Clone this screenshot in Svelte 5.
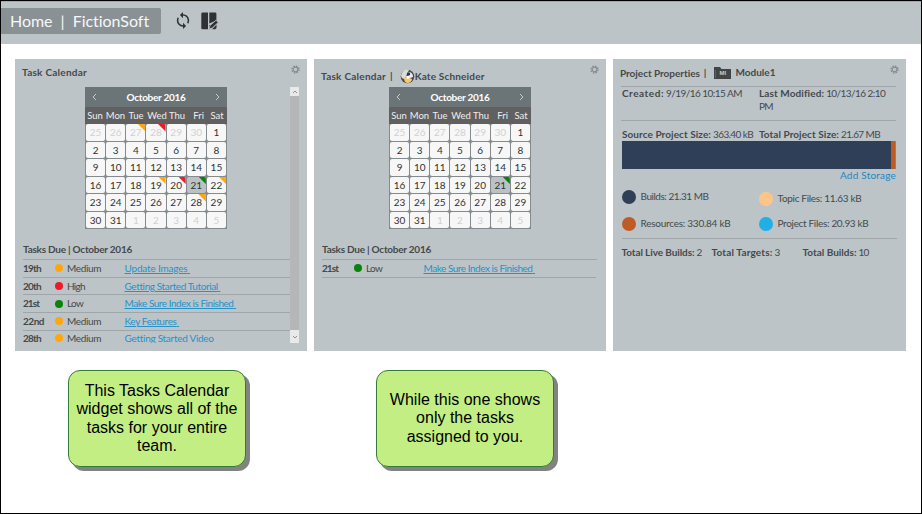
<script>
  const weekdays = ['Sun', 'Mon', 'Tue', 'Wed', 'Thu', 'Fri', 'Sat'];
  const days = [
    ...[25, 26, 27, 28, 29, 30].map((n) => ({ n, out: true })),
    ...Array.from({ length: 31 }, (_, i) => ({ n: i + 1, out: false })),
    ...[1, 2, 3, 4, 5].map((n) => ({ n, out: true }))
  ];
  const teamFlags = { 2: 'orange', 3: 'red', 24: 'orange', 25: 'red', 26: 'green', 27: 'orange', 33: 'orange' };
  const myFlags = { 26: 'green' };

  const teamTasks = [
    { day: '19th', dw: 18, color: 'orange', level: 'Medium', lw: 34, name: 'Update Images', w: 63 },
    { day: '20th', dw: 18, color: 'red', level: 'High', lw: 18, name: 'Getting Started Tutorial', w: 93 },
    { day: '21st', dw: 16, color: 'green', level: 'Low', lw: 16, name: 'Make Sure Index is Finished', w: 109 },
    { day: '22nd', dw: 21, color: 'orange', level: 'Medium', lw: 34, name: 'Key Features', w: 52 },
    { day: '28th', dw: 18, color: 'orange', level: 'Medium', lw: 34, name: 'Getting Started Video', w: 89, plain: true }
  ];
  const myTasks = [teamTasks[2]];

  // Tracks the text so that the label fills the given width.
  function fit(node, width) {
    const natural = node.getBoundingClientRect().width;
    node.style.letterSpacing = (width - natural) / node.textContent.length + 'px';
  }
</script>

{#snippet label(text, width, cls = '')}
  <span class="label {cls}" use:fit={width}>{text}</span>
{/snippet}

{#snippet gear()}
  <svg class="gear" viewBox="0 0 10 10" width="9" height="9">
    <circle cx="5" cy="5" r="3.9" fill="none" stroke="#858b8e" stroke-width="1.4" stroke-dasharray="1.75 1.313" />
    <circle cx="5" cy="5" r="2.6" fill="none" stroke="#858b8e" stroke-width="1.2" />
  </svg>
{/snippet}

{#snippet calendar(flags)}
  <div class="calendar">
    <div class="month">
      <svg width="5" height="8" viewBox="0 0 5 8"><path d="M4 1 1 4l3 3" /></svg>
      {@render label('October 2016', 59, 'bold')}
      <svg width="5" height="8" viewBox="0 0 5 8"><path d="M1 1l3 3-3 3" /></svg>
    </div>
    <div class="weekdays">
      {#each weekdays as d}<span class={d}>{d}</span>{/each}
    </div>
    <div class="days">
      {#each days as d, i}
        <div class="cell" class:out={d.out} class:today={i === 26}>
          {d.n}
          {#if flags[i]}<i class="flag {flags[i]}"></i>{/if}
        </div>
      {/each}
    </div>
  </div>
{/snippet}

{#snippet taskList(tasks)}
  <div class="due">{@render label('Tasks Due | October 2016', 109, 'semi')}</div>
  <div class="tasks">
    {#each tasks as t}
      <div class="task">
        {@render label(t.day, t.dw, 'semi')}
        <i class="dot {t.color}"></i>
        {@render label(t.level, t.lw)}
        <a class:plain={t.plain}>{@render label(t.name, t.w)}{#if !t.plain}&nbsp;{/if}</a>
      </div>
    {/each}
  </div>
{/snippet}

<div class="page">
  <header>
    <div class="crumb">{@render label('Home | FictionSoft', 139)}</div>
    <svg class="sync" width="14" height="17" viewBox="3.500 1 17 22">
      <path fill="#2f3234" d="M12 4V1L8 5l4 4V6c3.310 0 6 2.690 6 6 0 1.010-.25 1.970-.7 2.800l1.460 1.460C19.540 15.030 20 13.570 20 12c0-4.420-3.580-8-8-8zm0 14c-3.310 0-6-2.690-6-6 0-1.010.25-1.970.7-2.800L5.240 7.740C4.460 8.970 4 10.430 4 12c0 4.420 3.580 8 8 8v3l4-4-4-4v3z" />
    </svg>
    <svg class="layout" width="18" height="18" viewBox="0 0 18 18">
      <path d="M1.500.5H7v16.700H1.500A1.200 1.200 0 0 1 .3 16V1.700A1.200 1.200 0 0 1 1.500.5zM8.300.5h5.900a1.200 1.200 0 0 1 1.200 1.200v6.700l-7.100 3zM8.300 13h2l-1 4.200h-1zM15.500 12.500v3.500l-1.200 1.200H11z" fill="#2f3234" />
      <path d="M8 16.800l1-3.300 6-5.300 2.200 2.200-5.900 5.600z" fill="#2f3234" stroke="#bcc4c8" stroke-width=".8" />
    </svg>
  </header>

  <main>
    <section class="panel team">
      <div class="title">{@render label('Task Calendar', 65, 'semi')}{@render gear()}</div>
      <div class="scroll">
        <div class="content">
          {@render calendar(teamFlags)}
          {@render taskList(teamTasks)}
        </div>
        <div class="bar">
          <span><svg width="6" height="4" viewBox="0 0 6 4"><path d="M1 3l2-2 2 2" /></svg></span>
          <span class="down"><svg width="6" height="4" viewBox="0 0 6 4"><path d="M1 1l2 2 2-2" /></svg></span>
        </div>
      </div>
    </section>

    <section class="panel mine">
      <div class="title">
        {@render label('Task Calendar', 65, 'semi')}
        <b class="sep">|</b>
        <svg class="avatar" width="15" height="15" viewBox="0 0 15 15">
          <circle cx="7.500" cy="7.500" r="6.800" fill="#4b4a49" />
          <path d="M1 6Q4-1 9 1L7 5 5 10Q1 10 1 6z" fill="#d9ddd9" />
          <path d="M8 3q5 0 5 5l-3 1q-3-1-2-6z" fill="#e9edf3" />
          <circle cx="8.500" cy="5" r="1.700" fill="#313439" />
          <path d="M4 9q3-2 8 1 0 3-4 4-4 0-4-5z" fill="#f4c875" />
          <path d="M6 7h3l1 2-3 1z" fill="#fff" />
        </svg>
        {@render label('Kate Schneider', 70, 'semi')}
        {@render gear()}
      </div>
      <div class="content">
        {@render calendar(myFlags)}
        {@render taskList(myTasks)}
      </div>
    </section>

    <section class="panel project">
      <div class="title">
        {@render label('Project Properties', 80, 'semi')}
        <b class="sep">|</b>
        <div class="folder"><svg width="17" height="12" viewBox="0 0 17 12"><path d="M0 0h6l1.500 2H17v10H0z" fill="#404547" /><path d="M1.500 3v8" stroke="#687073" stroke-width=".7" /></svg><em>MI</em></div>
        <div class="module">{@render label('Module1', 40, 'semi')}</div>
        {@render gear()}
      </div>
      <div class="dates">
        <p>{@render label('Created:', 42, 'semi')}{@render label('9/19/16 10:15 AM', 76)}</p>
        <div>
          <p>{@render label('Last Modified:', 65, 'semi')}{@render label('10/13/16 2:10', 59)}</p>
          <p>{@render label('PM', 14)}</p>
        </div>
      </div>
      <div class="sizes">
        <p>{@render label('Source Project Size:', 89, 'semi')}{@render label('363.40 kB', 40)}</p>
        <p>{@render label('Total Project Size:', 80, 'semi')}{@render label('21.67 MB', 39)}</p>
      </div>
      <div class="usage"><i class="res"></i><i class="files"></i></div>
      <div class="add">{@render label('Add Storage', 56)}</div>
      <div class="legend">
        <p><i class="builds"></i>{@render label('Builds: 21.31 MB', 68)}</p>
        <p class="topic"><i></i>{@render label('Topic Files: 11.63 kB', 84)}</p>
        <p><i class="res"></i>{@render label('Resources: 330.84 kB', 90)}</p>
        <p><i class="files"></i>{@render label('Project Files: 20.93 kB', 91)}</p>
      </div>
      <div class="totals">
        <p>{@render label('Total Live Builds:', 73, 'semi')}{@render label('2', 5)}</p>
        <p>{@render label('Total Targets:', 61, 'semi')}{@render label('3', 5)}</p>
        <p>{@render label('Total Builds:', 54, 'semi')}{@render label('10', 10)}</p>
      </div>
    </section>
  </main>

  <div class="notes">
    <div class="note">This Tasks Calendar<br />widget shows all of the<br />tasks for your entire<br />team.</div>
    <div class="note">While this one shows<br />only the tasks<br />assigned to you.</div>
  </div>
</div>

<style>
  :global(body) { margin: 0; }
  * { box-sizing: border-box; }
  p { margin: 0; display: flex; gap: 2px; }
  .page {
    width: 922px; height: 514px; border: 1px solid #000; background: #fff; overflow: hidden;
    font: 10px/14px Lato, 'Open Sans', sans-serif; color: #45494b;
  }
  .label { display: inline-block; white-space: nowrap; }
  .semi, .bold { font-weight: 700; }
  header { height: 43px; background: #bcc4c8; display: flex; border-top: 1px solid #a2a9ac; padding-top: 6px; }
  .crumb {
    width: 160px; height: 26px; background: #899195; border-radius: 0 2px 2px 0; padding-left: 9px;
    color: #f6f7f7; font-size: 16px; line-height: 26px; word-spacing: 4px;
  }
  .sync { margin: 4px 0 0 15px; }
  .layout { margin: 4px 0 0 11px; }
  main { display: flex; gap: 7px; padding: 15px 0 0 14px; }
  .panel { width: 292px; height: 292px; background: #bcc4c8; }
  .title { display: flex; height: 28px; padding: 6px 7px 0 7px; }
  .gear { margin: 0 0 0 auto; }
  .mine .title { padding-top: 10px; }
  .mine .gear { margin-top: -4px; }
  .project .gear { margin-top: -1px; }
  .sep { margin-left: 4px; line-height: 13px; }
  .avatar { margin: 0 0 0 7px; }
  .scroll { display: flex; height: 256px; overflow: hidden; }
  .team .content { width: 275px; }
  .team .calendar { margin-left: 70px; }
  .calendar { width: 142px; height: 142px; margin-left: 75px; color: #fff; background: #858a8c; }
  .month { height: 20px; background: #6b7477; display: flex; justify-content: space-between; align-items: center; padding: 0 7px; }
  .month svg { fill: none; stroke: #c4cacc; stroke-width: 1; }
  .weekdays { height: 17px; background: #606060; display: grid; grid-template-columns: 20px 21px 20px 22px 18px 21px 20px; font-size: 9.5px; line-height: 18px; color: #eee; }
  .weekdays span { text-align: center; white-space: nowrap; }
  .weekdays .Fri { text-align: right; padding-right: 3px; }
  .days { height: 105px; display: grid; grid-template-columns: repeat(7, 1fr); grid-template-rows: repeat(6, 1fr); gap: 1px; padding: 0 1px 1px; }
  .cell { position: relative; background: #f7f7f7; color: #303334; text-align: center; line-height: 17px; border-radius: 2px; overflow: hidden; }
  .cell.out { color: #d0d1d2; }
  .cell.today { background: #bac2c6; }
  .flag { position: absolute; right: 0; top: 0; width: 7.5px; height: 7.5px; clip-path: polygon(0 0, 100% 0, 100% 100%); }
  .orange { background: #ffa60b; }
  .red { background: #ed1c24; }
  .green { background: #088408; }
  .due { height: 31px; margin-left: 8px; padding-top: 13px; border-bottom: 1px solid #9fa5a8; }
  .tasks { margin: 0 0 0 8px; }
  .mine .due { margin-right: 9px; }
  .mine .tasks { margin-right: 10px; }
  .task {
    height: 17.700px; display: grid; grid-template-columns: 32px 12px 57.500px 1fr; align-items: center; justify-items: start;
    border-bottom: 1px solid #9fa5a8; line-height: 13px;
  }
  .dot { width: 8px; height: 8px; border-radius: 50%; }
  .task a { color: #2492cb; text-decoration: underline; white-space: nowrap; }
  .task a .label { text-decoration: underline; }
  .task a.plain, .task a.plain .label { text-decoration: none; }
  .team .task:last-child { border: 0; height: 14px; padding-top: 1px; line-height: 12px; }
  .bar { width: 9px; background: #b4b6b8; display: flex; flex-direction: column; justify-content: space-between; }
  .bar span { height: 9px; background: #e8e9e9; display: flex; align-items: center; justify-content: center; }
  .bar .down { height: 13px; }
  .bar svg { fill: none; stroke: #8f9395; }
  .folder { position: relative; width: 17px; margin: 1px 5px 0 8px; }
  .folder svg { display: block; }
  .folder em { position: absolute; left: 5px; top: 2px; font: 700 6px/9px 'Liberation Sans', sans-serif; color: #c8cdcf; }
  .module { margin: -1px 0 0 -1px; }
  .project { width: 293px; }
  .project .title { height: 27px; padding-top: 7px; }
  .dates { display: flex; height: 35px; margin: 0 10px 0 8px; border-top: 1px solid #9fa5a8; border-bottom: 1px solid #9fa5a8; line-height: 13px; padding-left: 1px; }
  .dates > p, .sizes > p:first-child { width: 137px; }
  .sizes { display: flex; height: 20px; padding: 7px 0 0 9px; }
  .sizes p { line-height: 13px; }
  .usage { margin: 0 10px 0 8.500px; height: 28px; background: #303f58; display: flex; justify-content: flex-end; border-right: 1px solid #3f9fb7; }
  .usage .res { width: 4px; }
  .res { background: #bf5c25; }
  .files { background: #22aee6; }
  .add { display: flex; justify-content: flex-end; height: 20px; padding-right: 10px; color: #2385c3; line-height: 13px; }
  .legend { display: grid; grid-template-columns: 137px 1fr; grid-template-rows: 26.500px 26.500px; margin: 0 9px 0 8.500px; height: 50px; border-bottom: 1px solid #9fa5a8; }
  .legend p { gap: 5px; height: 16px; align-items: center; line-height: 12px; }
  .legend .label { margin-top: -2px; }
  .legend .topic { padding-top: 3px; }
  .legend i { width: 14px; height: 14px; border-radius: 50%; background: #fdc688; }
  .legend i.builds { background: #303f58; }
  .legend i.res { background: #bf5c25; }
  .legend i.files { background: #22aee6; }
  .totals { display: grid; grid-template-columns: 90px 91px 1fr; padding: 6px 0 0 8.500px; }
  .notes { display: flex; gap: 131px; padding: 19px 0 0 67px; }
  .note {
    width: 178px; height: 97px; border: 1px solid #347c37; border-radius: 12px; background: #c2ee84; box-shadow: 4px 4px 0 #828282;
    display: flex; align-items: center; justify-content: center; text-align: center; white-space: nowrap;
    font: 16px/18.400px 'Liberation Sans', Arial, sans-serif; color: #000;
  }
  .note + .note { margin-left: -1px; }
</style>
